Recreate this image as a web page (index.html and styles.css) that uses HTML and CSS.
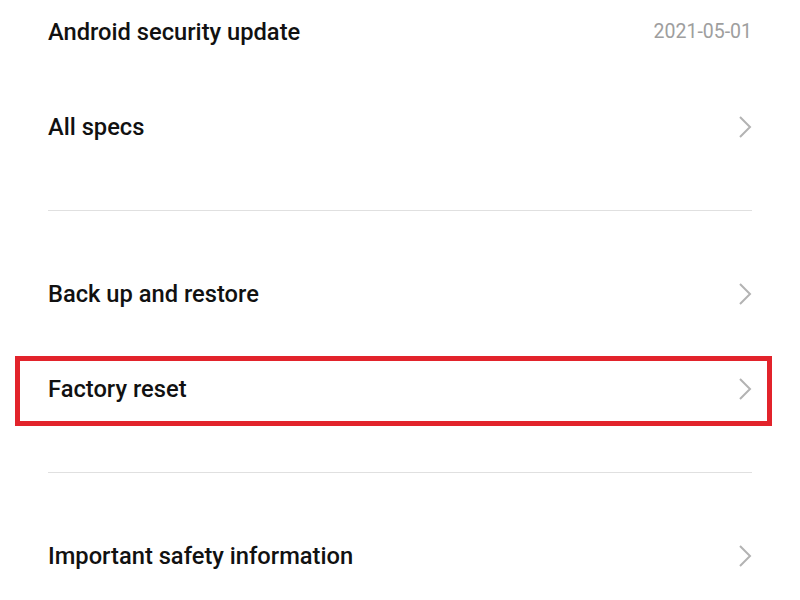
FILE: index.html
```html
<!DOCTYPE html>
<html>
<head>
<meta charset="utf-8">
<link rel="stylesheet" href="styles.css">
</head>
<body>
<div class="list">
  <div class="row">
    <span class="label">Android security update</span>
    <span class="value">2021-05-01</span>
  </div>
  <div class="row">
    <span class="label">All specs</span>
    <svg class="chev" viewBox="0 0 16 24" width="16" height="24"><path d="M3 2 L13 12 L3 22" fill="none" stroke="#b3b3b3" stroke-width="2"/></svg>
  </div>
  <div class="sep"></div>
  <div class="row">
    <span class="label">Back up and restore</span>
    <svg class="chev" viewBox="0 0 16 24" width="16" height="24"><path d="M3 2 L13 12 L3 22" fill="none" stroke="#b3b3b3" stroke-width="2"/></svg>
  </div>
  <div class="row highlight">
    <span class="label">Factory reset</span>
    <svg class="chev" viewBox="0 0 16 24" width="16" height="24"><path d="M3 2 L13 12 L3 22" fill="none" stroke="#b3b3b3" stroke-width="2"/></svg>
  </div>
  <div class="sep"></div>
  <div class="row">
    <span class="label">Important safety information</span>
    <svg class="chev" viewBox="0 0 16 24" width="16" height="24"><path d="M3 2 L13 12 L3 22" fill="none" stroke="#b3b3b3" stroke-width="2"/></svg>
  </div>
</div>
</body>
</html>
```
FILE: styles.css
```css
html, body {
  margin: 0;
  padding: 0;
  background: #ffffff;
  overflow: hidden;
}
body {
  width: 800px;
  height: 600px;
  font-family: Roboto, "Liberation Sans", sans-serif;
}
.list {
  margin-top: -16px;
  padding: 0 48px;
  display: flex;
  flex-direction: column;
}
.row {
  position: relative;
  height: 95px;
  display: flex;
  align-items: center;
  justify-content: space-between;
}
.label {
  font-size: 23.7px;
  font-weight: 500;
  color: #111111;
}
.value {
  font-size: 19.5px;
  color: #9e9e9e;
}
.chev {
  display: block;
  margin-right: -1px;
}
.sep {
  height: 72px;
  display: flex;
  align-items: center;
}
.sep::before {
  content: "";
  display: block;
  width: 100%;
  height: 1px;
  background: #e0e0e0;
}
.highlight::after {
  content: "";
  position: absolute;
  left: -33px;
  right: -20px;
  top: 15px;
  bottom: 10px;
  border: 5px solid #e2232b;
}
```
